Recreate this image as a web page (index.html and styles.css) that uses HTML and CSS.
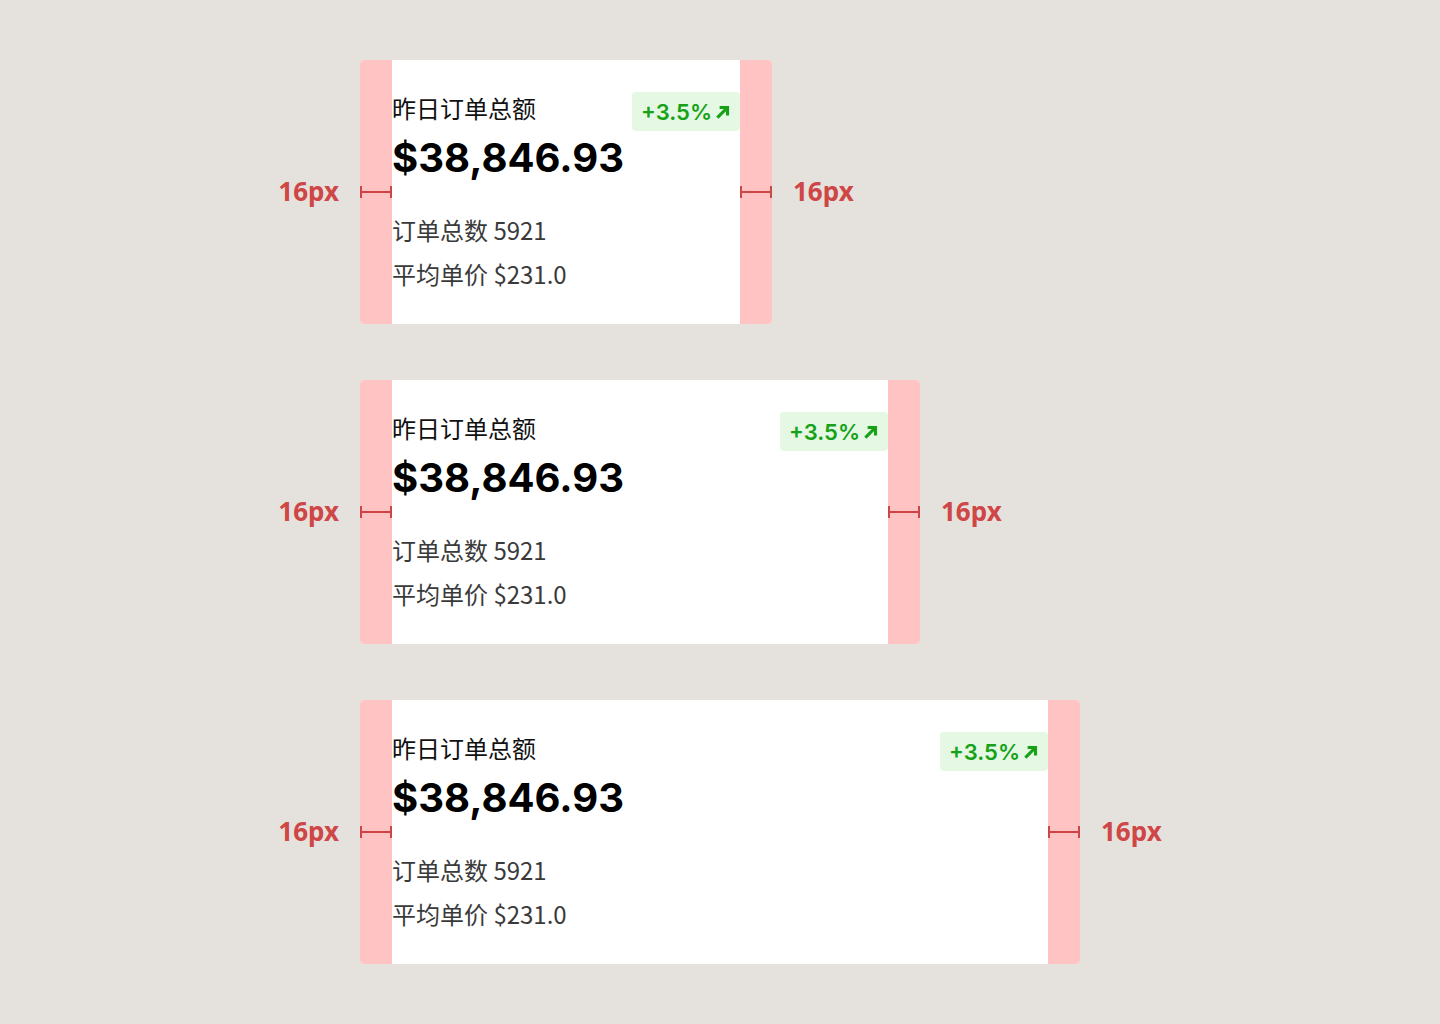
FILE: index.html
```html
<!DOCTYPE html>
<html lang="zh-CN">
<head>
    <meta charset="UTF-8">
    <meta name="viewport" content="width=device-width, initial-scale=1.0">
    <title>卡片内边距标注</title>
    <link rel="stylesheet" href="styles.css">
</head>
<body>

    <div class="board">

        <div class="row">
            <div class="dim-label dim-left">16px</div>
            <div class="card card-sm">
                <div class="pad pad-left"><span class="measure"></span></div>
                <div class="pad pad-right"><span class="measure"></span></div>
                <div class="card-head">
                    <div class="card-title">昨日订单总额</div>
                    <div class="badge">+3.5%<svg class="arrow" viewBox="0 0 16 16"><path d="M3 13 L12 4 M5 4 H12 V11" /></svg></div>
                </div>
                <div class="amount">$38,846.93</div>
                <div class="meta">订单总数 5921</div>
                <div class="meta">平均单价 $231.0</div>
            </div>
            <div class="dim-label dim-right">16px</div>
        </div>

        <div class="row">
            <div class="dim-label dim-left">16px</div>
            <div class="card card-md">
                <div class="pad pad-left"><span class="measure"></span></div>
                <div class="pad pad-right"><span class="measure"></span></div>
                <div class="card-head">
                    <div class="card-title">昨日订单总额</div>
                    <div class="badge">+3.5%<svg class="arrow" viewBox="0 0 16 16"><path d="M3 13 L12 4 M5 4 H12 V11" /></svg></div>
                </div>
                <div class="amount">$38,846.93</div>
                <div class="meta">订单总数 5921</div>
                <div class="meta">平均单价 $231.0</div>
            </div>
            <div class="dim-label dim-right">16px</div>
        </div>

        <div class="row">
            <div class="dim-label dim-left">16px</div>
            <div class="card card-lg">
                <div class="pad pad-left"><span class="measure"></span></div>
                <div class="pad pad-right"><span class="measure"></span></div>
                <div class="card-head">
                    <div class="card-title">昨日订单总额</div>
                    <div class="badge">+3.5%<svg class="arrow" viewBox="0 0 16 16"><path d="M3 13 L12 4 M5 4 H12 V11" /></svg></div>
                </div>
                <div class="amount">$38,846.93</div>
                <div class="meta">订单总数 5921</div>
                <div class="meta">平均单价 $231.0</div>
            </div>
            <div class="dim-label dim-right">16px</div>
        </div>

    </div>

</body>
</html>
```

FILE: styles.css
```css
:root {
    --page-bg: #e5e2dd;
    --pad-pink: #ffc3c3;
    --dim-red: #cf4646;
    --badge-green: #16a116;
    --badge-bg: #e4f8e4;
}

body {
    margin: 0;
    background-color: var(--page-bg);
    font-family: "Noto Sans CJK SC", "Noto Sans", sans-serif;
    color: #111;
}

.board {
    padding-top: 60px;
}

.row {
    display: flex;
    align-items: center;
    margin-bottom: 56px;
}

/* "16px" labels beside each card */
.dim-label {
    font-family: "Noto Sans", "Noto Sans CJK SC", sans-serif;
    font-weight: 700;
    font-size: 26px;
    line-height: 32px;
    color: var(--dim-red);
    position: relative;
    top: -1px;
}

.dim-left {
    width: 339px;
    text-align: right;
    margin-right: 21px;
}

.dim-right {
    margin-left: 21px;
}

.card {
    position: relative;
    box-sizing: border-box;
    height: 264px;
    padding: 32px 32px 0;
    background-color: #fff;
    border-radius: 4px;
}

.card-sm { width: 412px; }
.card-md { width: 560px; }
.card-lg { width: 720px; }

/* padding highlight overlays */
.pad {
    position: absolute;
    top: 0;
    bottom: 0;
    width: 32px;
    background-color: var(--pad-pink);
}

.pad-left {
    left: 0;
    border-radius: 4px 0 0 4px;
}

.pad-right {
    right: 0;
    border-radius: 0 4px 4px 0;
}

.measure {
    position: absolute;
    left: 0;
    right: 0;
    top: 126px;
    height: 12px;
    border-left: 2px solid var(--dim-red);
    border-right: 2px solid var(--dim-red);
}

.measure::after {
    content: "";
    position: absolute;
    left: 0;
    right: 0;
    top: 5px;
    height: 2px;
    background-color: var(--dim-red);
}

.card-head {
    display: flex;
    justify-content: space-between;
    align-items: flex-start;
}

.card-title {
    font-size: 24px;
    line-height: 32px;
    color: #111;
}

.badge {
    display: flex;
    align-items: center;
    height: 39px;
    padding: 0 8px 0 9px;
    border-radius: 4px;
    background-color: var(--badge-bg);
    color: var(--badge-green);
    font-family: "Inter", "Noto Sans", sans-serif;
    font-weight: 600;
    font-size: 22px;
}

.arrow {
    width: 18px;
    height: 18px;
    margin-left: 2px;
    fill: none;
    stroke: var(--badge-green);
    stroke-width: 2.8;
}

.amount {
    margin-top: 3px;
    margin-bottom: 26px;
    font-family: "Inter", "Noto Sans", sans-serif;
    font-weight: 700;
    font-size: 40px;
    line-height: 48px;
    color: #000;
}

.meta {
    font-size: 24px;
    line-height: 44px;
    color: #3a3a3a;
}
```
